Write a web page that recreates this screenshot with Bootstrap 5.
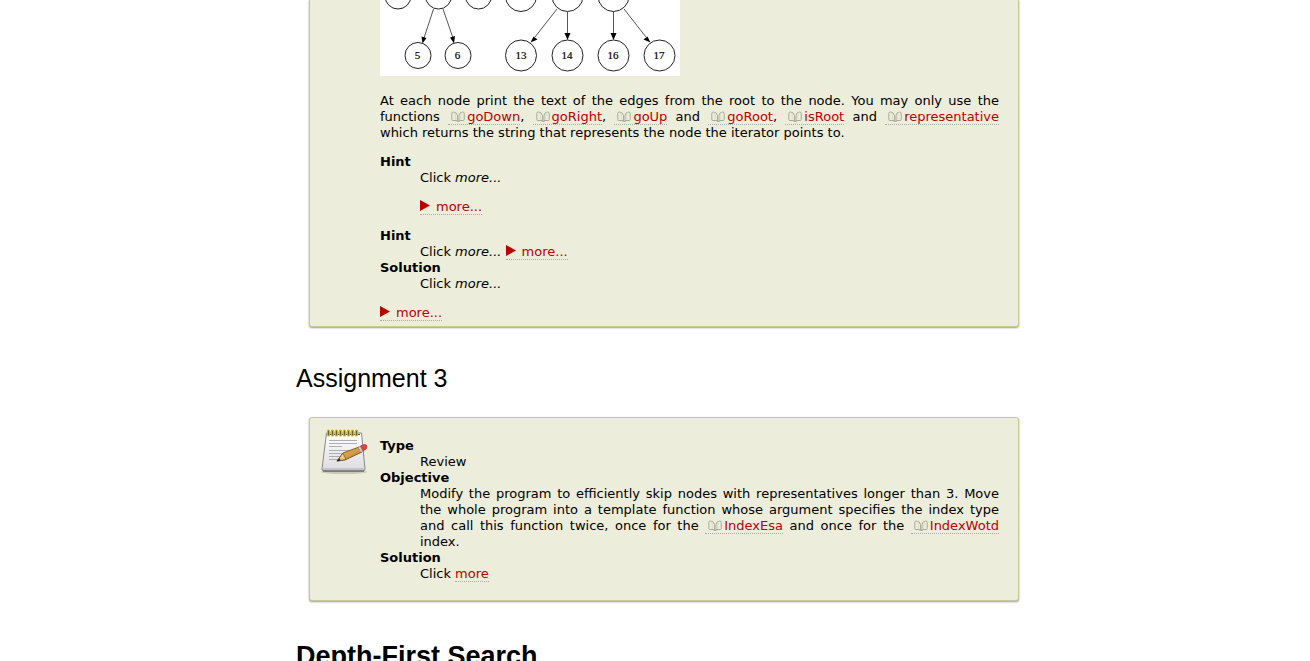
<!DOCTYPE html>
<html lang="en">
<head>
<meta charset="utf-8">
<meta name="viewport" content="width=device-width, initial-scale=1">
<title>Index Iterators Tutorial</title>
<link href="https://cdn.jsdelivr.net/npm/bootstrap@5.3.0/dist/css/bootstrap.min.css" rel="stylesheet">
<style>
  body { font: 13px/16px Verdana, "DejaVu Sans", sans-serif; color: #000; background: #fff; }
  .page { max-width: 740px; padding: 0 6px 0 11px; }
  .box { margin-left: 13px; padding: 0 19px 0 70px; background: #ecedda; border: 1px solid #c8ca96; border-radius: 3px; box-shadow: 0 1px 2px rgba(0,0,0,.4); text-align: justify; }
  .box-continued { border-top: 0; border-top-left-radius: 0; border-top-right-radius: 0; padding-bottom: 5px; }
  .box-assignment { padding-top: 20px; padding-bottom: 18px; }
  .box p { margin: 0 0 13px; }
  .box dl { margin: 0; }
  .box dd { margin: 0 0 0 40px; }
  .box a { color: #b00; text-decoration: none; border-bottom: 1px dotted #aaa; white-space: nowrap; }
  .box a:hover { color: #000; }
  .api svg { width: 14px; height: 12px; margin: 0 2px 0 3px; vertical-align: -2px; }
  .more svg { width: 10px; height: 12px; margin-right: 6px; vertical-align: -1px; }
  .tree { width: 300px; height: 76px; background: #fff; margin-bottom: 17px; }
  .notepad { left: 10px; top: 9px; width: 50px; height: 48px; }
  h2, h3 { font-family: "Liberation Sans", Arial, sans-serif; color: #000; margin: 0; }
  h3 { font-size: 25px; line-height: 30px; font-weight: 400; padding: 36px 0 24px; }
  h2 { font-size: 27px; line-height: 32px; font-weight: 700; padding-top: 39px; }
</style>
</head>
<body>
<svg class="d-none" aria-hidden="true">
  <symbol id="book" viewBox="0 0 14 12">
    <path d="M5.800 10.500V9.500H1.800Q.8 9.500.8 8.500V2.500Q.8 1 2.300 1 5.800 1 6.500 4.500V10.500h1.500V4.500Q8.500 1 11.800 1q1.400 0 1.400 1.500v6q0 1-1 1H8.500v1" fill="none" stroke="#a8ab98"/>
    <path d="M2.500 1Q4.300 2 4.300 4.500v4M11.500 1Q9.700 2 9.700 4.500v4" fill="none" stroke="#d3d5c2" stroke-width=".8"/>
  </symbol>
  <symbol id="arrow" viewBox="0 0 10 12"><path d="M0 0v11l10-5.500z" fill="#b00"/></symbol>
</svg>
<div class="vh-100 overflow-hidden">
<main class="page mx-auto">
  <section class="box box-continued">
    <svg class="tree d-block" viewBox="0 0 300 76" role="img" aria-label="Suffix tree">
      <g fill="none" stroke="#222">
        <circle cx="18" cy="-4" r="13"/><circle cx="58.500" cy="-4" r="13"/><circle cx="98.500" cy="-4" r="13"/>
        <circle cx="141" cy="-4" r="15.500"/><circle cx="187.500" cy="-4" r="15.500"/><circle cx="233.500" cy="-4" r="15.500"/>
        <circle cx="38" cy="55.500" r="13"/><circle cx="78" cy="55.500" r="13"/>
        <circle cx="141" cy="55.500" r="15.500"/><circle cx="187.500" cy="55.500" r="15.500"/><circle cx="233.500" cy="55.500" r="15.500"/><circle cx="279.500" cy="55.500" r="15.500"/>
        <path stroke="#555" d="M53.500 9 44 38M63 9l10 29M177 9l-22 28M187.500 12v24M233.500 12v24M244 9l22 28"/>
      </g>
      <path fill="#000" d="M42.500 43.500l-1-7 5 1.500zM74 43.500l-4-6 5-1.500zM150.500 42.500l3-6 4 3zM187.500 40l-3-7h6zM233.500 40l-3-7h6zM270.500 42.500l-7-3 4-3z"/>
      <g font-family="Liberation Serif, Times New Roman, serif" font-size="11" text-anchor="middle" fill="#000" stroke="#000" stroke-width=".2">
        <text x="37.500" y="59">5</text><text x="77.500" y="59">6</text><text x="141" y="59">13</text><text x="187" y="59">14</text><text x="233" y="59">16</text><text x="279" y="59">17</text>
      </g>
    </svg>
    <p>At each node print the text of the edges from the root to the node. You may only use the functions <a class="api" href="#"><svg aria-hidden="true"><use href="#book"/></svg>goDown</a>, <a class="api" href="#"><svg aria-hidden="true"><use href="#book"/></svg>goRight</a>, <a class="api" href="#"><svg aria-hidden="true"><use href="#book"/></svg>goUp</a> and <a class="api" href="#"><svg aria-hidden="true"><use href="#book"/></svg>goRoot</a>, <a class="api" href="#"><svg aria-hidden="true"><use href="#book"/></svg>isRoot</a> and <a class="api" href="#"><svg aria-hidden="true"><use href="#book"/></svg>representative</a> which returns the string that represents the node the iterator points to.</p>
    <dl>
      <dt>Hint</dt>
      <dd><p>Click <em>more...</em></p><p><a class="more" href="#"><svg aria-hidden="true"><use href="#arrow"/></svg>more...</a></p></dd>
      <dt>Hint</dt>
      <dd>Click <em>more...</em> <a class="more" href="#"><svg aria-hidden="true"><use href="#arrow"/></svg>more...</a></dd>
      <dt>Solution</dt>
      <dd><p>Click <em>more...</em></p></dd>
    </dl>
    <a class="more" href="#"><svg aria-hidden="true"><use href="#arrow"/></svg>more...</a>
  </section>

  <h3>Assignment 3</h3>

  <section class="box box-assignment position-relative">
    <svg class="notepad position-absolute" viewBox="0 0 50 48" aria-hidden="true">
      <defs>
        <linearGradient id="paper" x2="0" y2="1"><stop stop-color="#fff"/><stop offset="1" stop-color="#dcdce0"/></linearGradient>
        <linearGradient id="wood" x2="1" y2="1"><stop stop-color="#f0c270"/><stop offset="1" stop-color="#b87820"/></linearGradient>
      </defs>
      <ellipse cx="24" cy="45" rx="23" ry="2" fill="#000" opacity=".15"/>
      <path d="M6.500 6h35l3.500 36q0 2-2 2H4q-2 0-2-2z" fill="url(#paper)" stroke="#88898b"/>
      <path d="M2.500 42h42" stroke="#aaa"/><path d="M3 44h41" stroke="#555"/>
      <path d="M9 13.500h28M9 16.500h28M9 19.500h13M9 23.500h28M9 26.500h26M9 29.500h13M9 32.500h10" stroke="#adaeb1"/>
      <path d="M7 7.500h33" stroke="#544817"/>
      <g fill="#5c5010" stroke="#d8b51c" stroke-width="1.200">
        <rect x="7.500" y="3" width="2" height="6" rx="1"/><rect x="11.500" y="3" width="2" height="6" rx="1"/><rect x="15.500" y="3" width="2" height="6" rx="1"/><rect x="19.500" y="3" width="2" height="6" rx="1"/><rect x="23.500" y="3" width="2" height="6" rx="1"/><rect x="27.500" y="3" width="2" height="6" rx="1"/><rect x="31.500" y="3" width="2" height="6" rx="1"/><rect x="35.500" y="3" width="2" height="6" rx="1"/>
      </g>
      <path d="M17 34l6-8L39 20l3 5-17 8z" fill="url(#wood)" stroke="#70440c" stroke-width=".8"/>
      <path d="M17 34l6-8 3 6.500z" fill="#e9c58b" stroke="#70440c" stroke-width=".6"/><path d="M16.500 34.500l3-3.500 1 2.500z" fill="#222"/>
      <path d="M38 20.500l3-1.500 3 5-3 1.500z" fill="#ccc" stroke="#777" stroke-width=".5"/>
      <path d="M40.500 19l3.500-1.500q3-.5 3 2.500 0 2-4 4z" fill="#dd4545" stroke="#a22" stroke-width=".6"/>
    </svg>
    <dl>
      <dt>Type</dt><dd>Review</dd>
      <dt>Objective</dt>
      <dd>Modify the program to efficiently skip nodes with representatives longer than 3. Move the whole program into a template function whose argument specifies the index type and call this function twice, once for the <a class="api" href="#"><svg aria-hidden="true"><use href="#book"/></svg>IndexEsa</a> and once for the <a class="api" href="#"><svg aria-hidden="true"><use href="#book"/></svg>IndexWotd</a> index.</dd>
      <dt>Solution</dt>
      <dd>Click <a href="#">more</a></dd>
    </dl>
  </section>

  <h2>Depth-First Search</h2>
</main>
</div>
<script src="https://cdn.jsdelivr.net/npm/bootstrap@5.3.0/dist/js/bootstrap.bundle.min.js"></script>
</body>
</html>
